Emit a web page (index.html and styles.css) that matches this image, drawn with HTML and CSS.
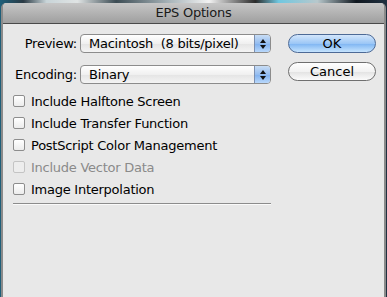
FILE: index.html
```html
<!DOCTYPE html>
<html lang="en">
<head>
    <meta charset="UTF-8">
    <title>EPS Options</title>
    <link rel="stylesheet" href="styles.css">
</head>
<body>
    <div class="desktop"></div>
    <div class="window">
        <div class="titlebar">EPS Options</div>
        <div class="content">
            <div class="options">
                <div class="field">
                    <span class="label">Preview:</span>
                    <div class="popup">
                        <span class="value">Macintosh&nbsp; (8 bits/pixel)</span>
                        <span class="arrows"><i class="up"></i><i class="down"></i></span>
                    </div>
                </div>
                <div class="field">
                    <span class="label">Encoding:</span>
                    <div class="popup">
                        <span class="value">Binary</span>
                        <span class="arrows"><i class="up"></i><i class="down"></i></span>
                    </div>
                </div>

                <div class="checks">
                    <label class="check"><span class="box"></span>Include Halftone Screen</label>
                    <label class="check"><span class="box"></span>Include Transfer Function</label>
                    <label class="check"><span class="box"></span>PostScript Color Management</label>
                    <label class="check disabled"><span class="box"></span>Include Vector Data</label>
                    <label class="check"><span class="box"></span>Image Interpolation</label>
                </div>
                <div class="separator"></div>
            </div>

            <div class="buttons">
                <button class="btn default">OK</button>
                <button class="btn">Cancel</button>
            </div>
        </div>
    </div>
</body>
</html>
```

FILE: styles.css
```css
body {
    margin: 0;
    width: 387px;
    height: 297px;
    overflow: hidden;
    font-family: "DejaVu Sans", "Liberation Sans", sans-serif;
    font-size: 12px;
    letter-spacing: -0.25px;
    color: #000;
    background: linear-gradient(90deg, #1e5f7a 0, #2a3a44 6%, #c8d4d8 12%, #e0e4e4 20%, #3c4c54 30%, #aab6bb 44%, #f2f2f2 54%, #2b2b2b 66%, #6fc7e0 72%, #b8c8cc 82%, #101820 92%, #203040 100%);
}

.desktop {
    height: 3px;
}

/* dialog window */
.window {
    margin-left: 1px;
    width: 381px;
    height: 294px;
    background: #e8e8e8;
    border-left: 2px solid #8a8a8a;
    border-right: 2px solid #8a8a8a;
    border-radius: 5px 5px 0 0;
    overflow: hidden;
}

.titlebar {
    height: 20px;
    line-height: 20px;
    text-align: center;
    font-size: 13px;
    color: #1a1a1a;
    background: linear-gradient(#c6c6c6, #9f9f9f);
    border-bottom: 1px solid #4a4a4a;
}

.content {
    display: flex;
    padding: 10px 0 0 10px;
}

.options {
    width: 258px;
}

/* popup menus */
.field {
    display: flex;
    align-items: center;
    margin-bottom: 12px;
}

.label {
    width: 64px;
    text-align: right;
    margin-right: 3px;
    font-size: 13px;
}

.popup {
    flex: 1;
    display: flex;
    height: 17px;
    border: 1px solid #8c8c8c;
    border-radius: 4px;
    background: linear-gradient(#ffffff, #f0f0f0 50%, #e4e4e4 51%, #f4f4f4);
    overflow: hidden;
}

.popup .value {
    flex: 1;
    padding-left: 8px;
    line-height: 17px;
    font-size: 13px;
}

.arrows {
    width: 15px;
    display: flex;
    flex-direction: column;
    align-items: center;
    justify-content: center;
    gap: 2px;
    border-left: 1px solid #7b8fb0;
    background: linear-gradient(#c8ddf5, #95bdf0 50%, #7fb0ef 51%, #b9d8fb);
}

.arrows i {
    width: 0;
    height: 0;
    border-left: 3px solid transparent;
    border-right: 3px solid transparent;
}

.arrows .up {
    border-bottom: 4px solid #111;
}

.arrows .down {
    border-top: 4px solid #111;
}

/* checkboxes */
.checks {
    display: flex;
    flex-direction: column;
    gap: 8px;
    margin-top: -2px;
}

.check {
    display: flex;
    align-items: center;
    height: 14px;
    font-size: 13px;
}

.check .box {
    width: 12px;
    height: 12px;
    margin-right: 6px;
    border: 1px solid #8d8d8d;
    border-radius: 2px;
    background: linear-gradient(#ffffff, #ececec);
    box-sizing: border-box;
}

.check.disabled {
    color: #8a8a8a;
}

.check.disabled .box {
    border-color: #c4c4c4;
    background: #ededed;
}

.separator {
    margin-top: 7px;
    height: 1px;
    background: #8c8c8c;
    border-bottom: 1px solid #fafafa;
}

/* buttons */
.buttons {
    display: flex;
    flex-direction: column;
    gap: 9px;
    margin-left: 17px;
}

.btn {
    width: 88px;
    height: 19px;
    padding: 0;
    font-family: inherit;
    font-size: 13px;
    color: #000;
    border: 1px solid #6f6f6f;
    border-radius: 10px;
    background: linear-gradient(#ffffff, #f2f2f2 50%, #e2e2e2 51%, #fbfbfb);
}

.btn.default {
    border-color: #4d6a96;
    background: linear-gradient(#d3e6fb, #9cc7f6 50%, #7db4f2 51%, #c6e4fe);
}
```
